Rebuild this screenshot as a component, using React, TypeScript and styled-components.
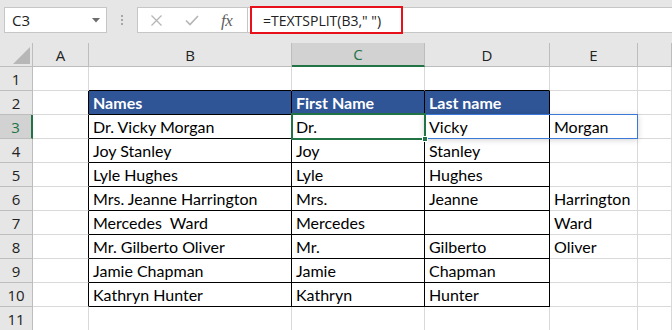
import React from "react";
import styled, { createGlobalStyle, css } from "styled-components";

const GlobalStyle = createGlobalStyle`
  html, body { margin: 0; padding: 0; background: #ffffff; }
  body { width: 672px; height: 330px; overflow: hidden; }
  * { box-sizing: border-box; }
`;

const CELL_FONT = `"Lato", "Open Sans", sans-serif`;
const UI_FONT = `"Open Sans", "Noto Sans", sans-serif`;
const GREEN = "#217346";
const GRID = "#d9d9d9";
const HEAD_LINE = "#bdbdbd";
const HEAD_BG = "#e6e6e6";

const Page = styled.div`
  width: 672px;
  height: 330px;
  overflow: hidden;
  background: ${HEAD_BG};
  display: flex;
  flex-direction: column;
`;

const Toolbar = styled.div`
  height: 43px;
  flex: none;
  display: flex;
  align-items: flex-start;
  padding-top: 7px;
  background: ${HEAD_BG};
`;

const NameBox = styled.div`
  margin-left: 4px;
  width: 103px;
  height: 26px;
  background: #fff;
  border: 1px solid #c6c6c6;
  display: flex;
  align-items: center;
  justify-content: space-between;
  padding: 0 6px 0 7px;
  font-family: ${UI_FONT};
  font-size: 15px;
  color: #222;
`;

const Grip = styled.div`
  width: 30px;
  height: 26px;
  display: flex;
  flex-direction: column;
  align-items: center;
  justify-content: center;
  gap: 2px;
  & > span {
    width: 2px;
    height: 2px;
    background: #a6a6a6;
  }
`;

const FxBox = styled.div`
  width: 111px;
  height: 26px;
  background: #fff;
  border: 1px solid #c6c6c6;
  display: flex;
  align-items: center;
  padding-left: 12px;
  gap: 22px;
`;

const FxLabel = styled.span`
  font-family: "Liberation Serif", serif;
  font-style: italic;
  font-size: 17px;
  color: #5f5f5f;
  letter-spacing: -0.5px;
  line-height: 1;
`;

const FormulaInput = styled.div`
  flex: 1;
  height: 26px;
  background: #fff;
  border-top: 1px solid #c6c6c6;
  border-bottom: 1px solid #c6c6c6;
  display: flex;
  align-items: center;
`;

const Highlight = styled.div`
  flex: none;
  margin-left: 2px;
  width: 153px;
  height: 28px;
  border: 2px solid #e8101a;
  display: flex;
  align-items: center;
  padding-left: 11px;
  font-family: ${UI_FONT};
  font-size: 14px;
  color: #222;
  white-space: pre;
`;

const Sheet = styled.div`
  flex: 1;
  display: grid;
  grid-template-columns: 33px 56px 203px 133px 125px 88px 1fr;
  grid-template-rows: 24px;
  grid-auto-rows: 24px;
  background: #fff;
`;

const Corner = styled.div`
  background: ${HEAD_BG};
  border-right: 1px solid ${HEAD_LINE};
  border-bottom: 1px solid ${HEAD_LINE};
  display: flex;
  align-items: flex-end;
  justify-content: flex-end;
  padding: 0 2px 2px 0;
`;

const ColHead = styled.div<{ $active?: boolean }>`
  background: ${HEAD_BG};
  border-right: 1px solid ${HEAD_LINE};
  border-bottom: 1px solid ${HEAD_LINE};
  display: flex;
  align-items: center;
  justify-content: center;
  font-family: ${UI_FONT};
  font-size: 15px;
  color: #222;
  ${(p) =>
    p.$active &&
    css`
      background: #d2d2d2;
      color: ${GREEN};
      border-bottom: 2px solid ${GREEN};
    `}
`;

const RowHead = styled.div<{ $active?: boolean }>`
  background: ${HEAD_BG};
  border-right: 1px solid ${HEAD_LINE};
  border-bottom: 1px solid ${HEAD_LINE};
  display: flex;
  align-items: center;
  justify-content: center;
  font-family: ${UI_FONT};
  font-size: 15px;
  color: #222;
  ${(p) =>
    p.$active &&
    css`
      background: #d2d2d2;
      color: ${GREEN};
      border-right: 2px solid ${GREEN};
    `}
`;

const Cell = styled.div<{ $rb?: string; $bb?: string; $head?: boolean }>`
  position: relative;
  border-right: 1px solid ${(p) => p.$rb || GRID};
  border-bottom: 1px solid ${(p) => p.$bb || GRID};
  display: flex;
  align-items: flex-end;
  padding: 0 0 2px 4px;
  font-family: ${CELL_FONT};
  font-size: 16px;
  line-height: 19px;
  color: #000;
  white-space: pre;
  ${(p) =>
    p.$head &&
    css`
      background: #2f5597;
      color: #fff;
      font-weight: 700;
    `}
`;

const Selection = styled.div`
  position: absolute;
  left: -1px;
  top: -2px;
  right: -2px;
  bottom: -2px;
  border: 2px solid ${GREEN};
  z-index: 3;
  pointer-events: none;
`;

const FillHandle = styled.div`
  position: absolute;
  right: -4px;
  bottom: -4px;
  width: 6px;
  height: 6px;
  background: ${GREEN};
  border: 1px solid #fff;
`;

const Spill = styled.div`
  position: absolute;
  left: -1px;
  top: -1px;
  width: 214px;
  height: 25px;
  border: 1px solid #3c78d8;
  box-shadow: 0 1px 6px rgba(0, 0, 0, 0.18);
  z-index: 2;
  pointer-events: none;
`;

// The F column is cut off by the window edge, so its letter is not visible.
const COLS = ["A", "B", "C", "D", "E", ""];

const DATA: string[][] = [
  ["", "", "", "", "", ""],
  ["", "Names", "First Name", "Last name", "", ""],
  ["", "Dr. Vicky Morgan", "Dr.", "Vicky", "Morgan", ""],
  ["", "Joy Stanley", "Joy", "Stanley", "", ""],
  ["", "Lyle Hughes", "Lyle", "Hughes", "", ""],
  ["", "Mrs. Jeanne Harrington", "Mrs.", "Jeanne", "Harrington", ""],
  ["", "Mercedes  Ward", "Mercedes", "", "Ward", ""],
  ["", "Mr. Gilberto Oliver", "Mr.", "Gilberto", "Oliver", ""],
  ["", "Jamie Chapman", "Jamie", "Chapman", "", ""],
  ["", "Kathryn Hunter", "Kathryn", "Hunter", "", ""],
  ["", "", "", "", "", ""],
];

const inTable = (r: number, c: number) => r >= 2 && r <= 10 && c >= 1 && c <= 3;

export default function App() {
  return (
    <>
      <GlobalStyle />
      <Page>
        <Toolbar>
          <NameBox>
            <span>C3</span>
            <svg width="8" height="5" viewBox="0 0 8 5">
              <path d="M0 0 L8 0 L4 4.5 Z" fill="#6d6d6d" />
            </svg>
          </NameBox>
          <Grip>
            <span />
            <span />
            <span />
          </Grip>
          <FxBox>
            <svg width="13" height="13" viewBox="0 0 13 13">
              <path d="M1.5 1.5 L11.5 11.5 M11.5 1.5 L1.5 11.5" stroke="#b5b5b5" strokeWidth="1.3" fill="none" />
            </svg>
            <svg width="14" height="11" viewBox="0 0 14 11">
              <path d="M1 5.5 L5 9.5 L13 1" stroke="#b5b5b5" strokeWidth="1.6" fill="none" />
            </svg>
            <FxLabel>fx</FxLabel>
          </FxBox>
          <FormulaInput>
            <Highlight>{'=TEXTSPLIT(B3," ")'}</Highlight>
          </FormulaInput>
        </Toolbar>
        <Sheet>
          <Corner>
            <svg width="17" height="17" viewBox="0 0 17 17">
              <path d="M17 0 L17 17 L0 17 Z" fill="#b7b7b7" />
            </svg>
          </Corner>
          {COLS.map((c, i) => (
            <ColHead key={i} $active={c === "C"}>
              {c}
            </ColHead>
          ))}
          {DATA.map((row, ri) => {
            const r = ri + 1;
            return (
              <React.Fragment key={r}>
                <RowHead $active={r === 3}>{r}</RowHead>
                {row.map((val, ci) => {
                  const rightBlack = inTable(r, ci) || inTable(r, ci + 1);
                  const bottomBlack = inTable(r, ci) || inTable(r + 1, ci);
                  const isSel = r === 3 && ci === 2;
                  const isSpill = r === 3 && ci === 3;
                  return (
                    <Cell
                      key={ci}
                      $rb={rightBlack ? "#000" : undefined}
                      $bb={bottomBlack ? "#000" : undefined}
                      $head={r === 2 && ci >= 1 && ci <= 3}
                    >
                      {val}
                      {isSpill && <Spill />}
                      {isSel && (
                        <Selection>
                          <FillHandle />
                        </Selection>
                      )}
                    </Cell>
                  );
                })}
              </React.Fragment>
            );
          })}
        </Sheet>
      </Page>
    </>
  );
}
